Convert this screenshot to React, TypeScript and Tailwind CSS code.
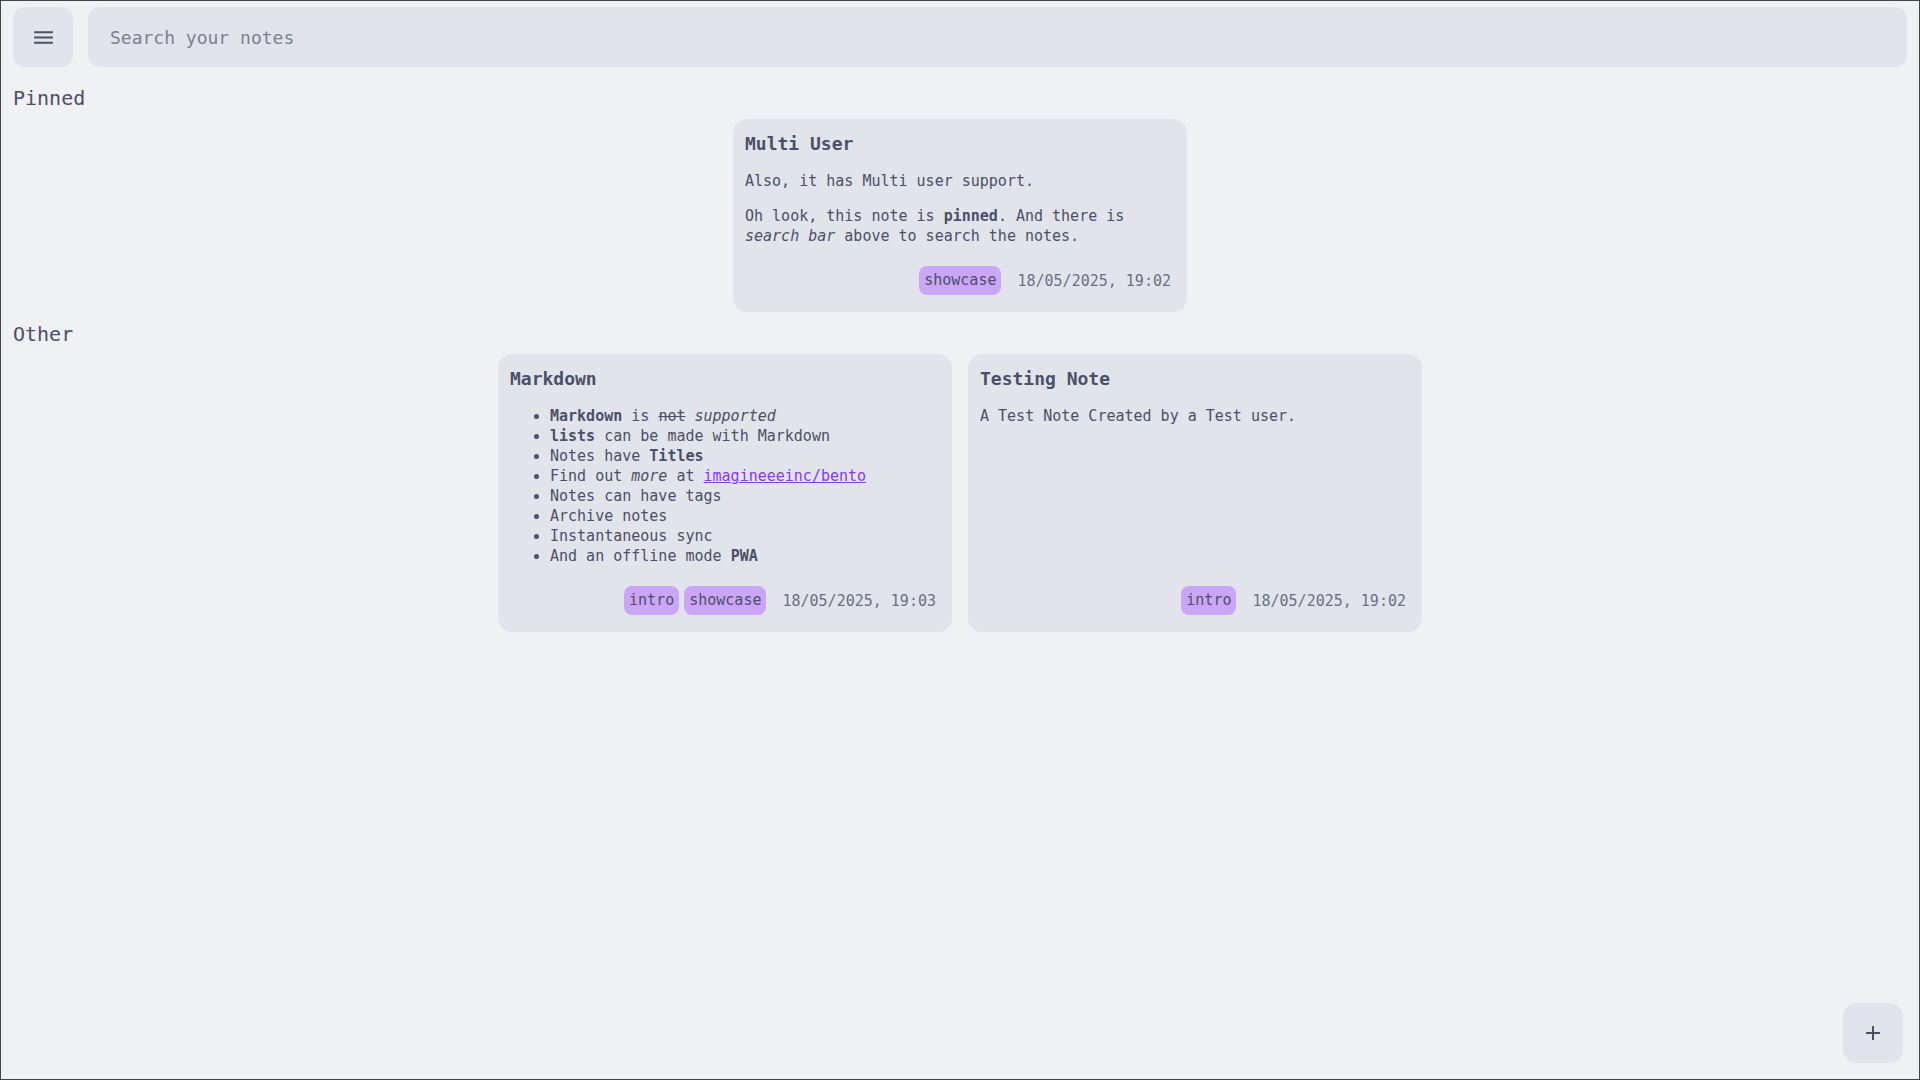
import React from 'react';

interface Note {
  title: string;
  body: React.ReactNode;
  tags: string[];
  date: string;
}

const pinned: Note[] = [
  {
    title: 'Multi User',
    body: (
      <div className="flex flex-col gap-[15px]">
        <p>Also, it has Multi user support.</p>
        <p>
          Oh look, this note is <b>pinned</b>. And there is <i>search bar</i> above to search the notes.
        </p>
      </div>
    ),
    tags: ['showcase'],
    date: '18/05/2025, 19:02',
  },
];

const others: Note[] = [
  {
    title: 'Markdown',
    body: (
      <ul className="list-disc pl-10">
        <li>
          <b>Markdown</b> is <s>not</s> <i>supported</i>
        </li>
        <li>
          <b>lists</b> can be made with Markdown
        </li>
        <li>
          Notes have <b>Titles</b>
        </li>
        <li>
          Find out <i>more</i> at{' '}
          <a href="#" className="text-[#8839ef] underline">
            imagineeeinc/bento
          </a>
        </li>
        <li>Notes can have tags</li>
        <li>Archive notes</li>
        <li>Instantaneous sync</li>
        <li>
          And an offline mode <b>PWA</b>
        </li>
      </ul>
    ),
    tags: ['intro', 'showcase'],
    date: '18/05/2025, 19:03',
  },
  {
    title: 'Testing Note',
    body: <p>A Test Note Created by a Test user.</p>,
    tags: ['intro'],
    date: '18/05/2025, 19:02',
  },
];

function NoteCard({ note }: { note: Note }) {
  return (
    <div className="w-[454px] rounded-[14px] bg-[#e1e4eb] pl-3 pr-4 pt-[11px] pb-[17px] flex flex-col">
      <h3 className="text-lg leading-7 font-bold text-[#4c4f69]">{note.title}</h3>
      <div className="mt-[13px] text-[15px] leading-5 text-[#4c4f69]">{note.body}</div>
      <div className="mt-auto pt-[20px] flex items-center justify-end">
        <div className="flex gap-[5px]">
          {note.tags.map(tag => (
            <span key={tag} className="px-[5px] py-1 rounded-[8px] bg-[#cba6f7] text-[15px] leading-[21px] text-[#4c4f69]">
              {tag}
            </span>
          ))}
        </div>
        <span className="ml-4 text-[15px] leading-5 text-[#6c6f85]">{note.date}</span>
      </div>
    </div>
  );
}

export default function App() {
  return (
    <div
      className="relative h-screen border border-[#444] bg-[#eff1f5] px-3 pt-[6px] text-[#4c4f69]"
      style={{ fontFamily: '"DejaVu Sans Mono", monospace' }}
    >
      {/* 顶栏 */}
      <div className="flex gap-[15px] h-[60px]">
        <button className="w-[60px] h-[60px] shrink-0 rounded-[12px] bg-[#e1e4eb] flex items-center justify-center">
          <svg width="25" height="25" viewBox="0 0 24 24" fill="#4c4f69">
            <path d="M3 18h18v-2H3v2zm0-5h18v-2H3v2zm0-7v2h18V6H3z" />
          </svg>
        </button>
        <input
          placeholder="Search your notes"
          className="flex-1 h-[60px] rounded-[12px] bg-[#e1e4eb] pl-[22px] text-lg text-[#4c4f69] placeholder:text-[#7c7f93] outline-none"
        />
      </div>

      {/* 置顶 */}
      <h2 className="mt-[17px] text-xl leading-7">Pinned</h2>
      <div className="mt-[7px] flex flex-wrap justify-center gap-4">
        {pinned.map(n => (
          <NoteCard key={n.title} note={n} />
        ))}
      </div>

      {/* 其他 */}
      <h2 className="mt-2 text-xl leading-7">Other</h2>
      <div className="mt-[6px] flex flex-wrap justify-center gap-4">
        {others.map(n => (
          <NoteCard key={n.title} note={n} />
        ))}
      </div>

      <button className="absolute right-[16px] bottom-[16px] w-[60px] h-[60px] rounded-[14px] bg-[#e1e4eb] flex items-center justify-center">
        <svg width="16" height="16" viewBox="0 0 16 16" stroke="#4c4f69" strokeWidth="2">
          <path d="M8 1v14M1 8h14" />
        </svg>
      </button>
    </div>
  );
}
